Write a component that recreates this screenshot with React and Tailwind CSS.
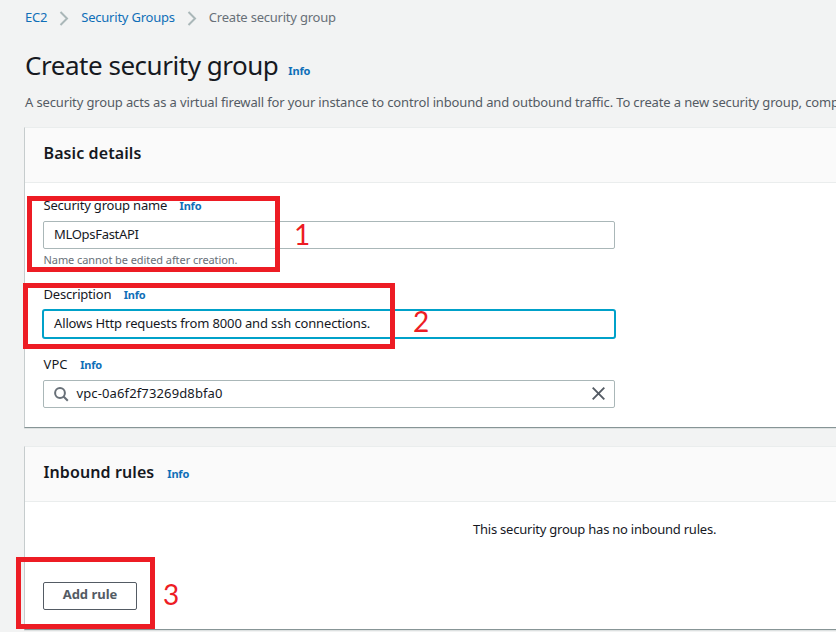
function Info({ className = "" }) {
  return <a className={`text-[11px] font-bold leading-4 tracking-[-0.2px] text-[#0f6fb8] ${className}`}>Info</a>;
}

function Chevron() {
  return (
    <svg className="h-[15px] w-[10px] shrink-0" viewBox="0 0 10 15" fill="none" stroke="#aab7b8" strokeWidth="2">
      <path d="M1.5 1L8 7.5L1.5 14" />
    </svg>
  );
}

function Panel({ title, info, className = "", children }) {
  return (
    <section className={`-mr-6 flex flex-col border-b border-l border-t border-b-[#879596] border-l-[#c6cccd] border-t-[#eaeded] bg-white shadow-[0_1px_0_0_#dde1e1] ${className}`}>
      <header className="flex h-[55px] shrink-0 items-center border-b border-[#eaeded] bg-[#fafafa] pb-1 pl-[18.5px]">
        <h2 className="text-[16px] font-semibold leading-6 tracking-[0.1px] text-[#16191f]">{title}</h2>
        {info && <Info className="ml-[13px] mt-1" />}
      </header>
      {children}
    </section>
  );
}

function Label({ children, className = "tracking-[-0.2px]" }) {
  return (
    <div className="flex h-5 items-center pl-[0.5px]">
      <span className={`pb-[2px] ${className}`}>{children}</span>
      <Info className="ml-[12.5px]" />
    </div>
  );
}

export default function App() {
  return (
    <div className="relative h-[632px] w-[836px] overflow-hidden bg-[#f2f3f3] pl-6 pr-6 font-['Noto_Sans','Open_Sans',sans-serif] text-[13px] leading-5 text-[#16191f]">
      <nav className="flex h-[36px] items-center pl-px tracking-[-0.22px] text-[#0f6fb8]">
        <a className="pb-[2px]">EC2</a>
        <span className="ml-3 flex"><Chevron /></span>
        <a className="ml-3 pb-[2px]">Security Groups</a>
        <span className="ml-3 flex"><Chevron /></span>
        <span className="ml-3 pb-[2px] text-[#687078]">Create security group</span>
      </nav>
      <div className="flex h-[56px] items-center pl-px pt-px">
        <h1 className="text-[26px] leading-8 tracking-[-0.47px]">Create security group</h1>
        <Info className="ml-[10px] mt-[13px]" />
      </div>
      <p className="h-[35px] whitespace-nowrap pl-px tracking-[-0.14px] text-[#545b64]">
        A security group acts as a virtual firewall for your instance to control inbound and outbound traffic. To create a new security group, comp
      </p>

      <Panel title="Basic details" className="h-[301px]">
        <div className="flex w-[590px] flex-col pl-[18px] pt-[13px]">
          <Label>Security group name</Label>
          <div className="mt-[5px] flex h-7 items-center rounded-[2px] border border-[#aab7b8] pb-[2px] pl-[10px] tracking-[-0.3px]">MLOpsFastAPI</div>
          <div className="mt-[3px] h-4 pl-[0.5px] text-[11px] leading-4 tracking-[-0.07px] text-[#687078]">Name cannot be edited after creation.</div>
          <div className="mt-[17px]"><Label>Description</Label></div>
          <div className="-mx-px mt-1 flex h-[30px] w-[574px] items-center rounded-[3px] border-2 border-[#00a1c9] pb-[2px] pl-[10px] tracking-[-0.14px]">
            Allows Http requests from 8000 and ssh connections.
          </div>
          <div className="mt-4"><Label className="tracking-[0.1px]">VPC</Label></div>
          <div className="mt-[5px] flex h-7 items-center rounded-[2px] border border-[#aab7b8] pl-[10px] pr-[9px]">
            <svg className="h-[15px] w-[15px]" viewBox="0 0 15 15" fill="none" stroke="#687078" strokeWidth="2">
              <circle cx="6" cy="6" r="4.9" />
              <path d="M9.5 9.5L13.8 13.8" />
            </svg>
            <span className="ml-[7.5px] pb-[2px] tracking-[0.13px]">vpc-0a6f2f73269d8bfa0</span>
            <svg className="mb-px ml-auto h-[13px] w-[13px]" viewBox="0 0 13 13" fill="none" stroke="#545b64" strokeWidth="1.9">
              <path d="M.7.7L12.3 12.3M12.3.7L.7 12.3" />
            </svg>
          </div>
        </div>
      </Panel>

      <Panel title="Inbound rules" info className="mt-[18px] h-[184px]">
        <p className="ml-[448px] mt-[17px] whitespace-nowrap tracking-[-0.23px]">This security group has no inbound rules.</p>
        <button className="ml-[18px] mt-[43px] flex h-7 w-[94px] items-center justify-center rounded-[2px] border border-[#545b64] pb-[4px] font-bold text-[#545b64]">
          Add rule
        </button>
      </Panel>

      <div className="absolute left-[27px] top-[196px] h-[76px] w-[253px] border-[5px] border-[#ed1c24]" />
      <div className="absolute left-[23px] top-[283px] h-[66px] w-[372px] border-[5px] border-[#ed1c24]" />
      <div className="absolute left-[16px] top-[557px] h-[72px] w-[139px] border-[5px] border-[#ed1c24]" />
      <span className="absolute left-[294px] top-[218px] font-['Lato','Noto_Sans',sans-serif] text-[28px] leading-8 text-[#ed1c24]">1</span>
      <span className="absolute left-[413px] top-[305px] font-['Lato','Noto_Sans',sans-serif] text-[28px] leading-8 text-[#ed1c24]">2</span>
      <span className="absolute left-[163px] top-[578px] font-['Lato','Noto_Sans',sans-serif] text-[28px] leading-8 text-[#ed1c24]">3</span>
    </div>
  );
}
